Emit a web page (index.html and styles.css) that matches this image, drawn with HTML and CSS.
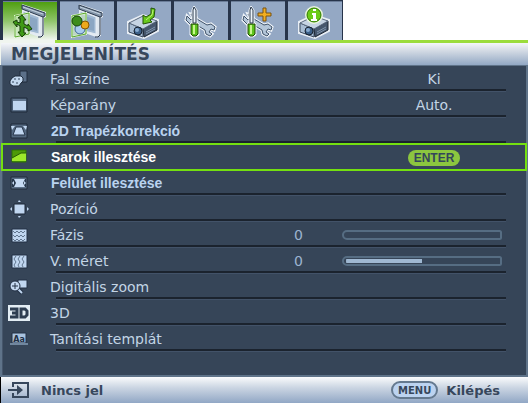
FILE: index.html
```
<!DOCTYPE html>
<html lang="hu">
<head>
    <meta charset="UTF-8">
    <meta name="viewport" content="width=device-width, initial-scale=1.0">
    <title>Megjelenítés</title>
    <link rel="stylesheet" href="styles.css">
</head>
<body>
    <!-- Shared shapes for the tab icons -->
    <svg class="defs" aria-hidden="true">
        <symbol id="screen" viewBox="0 0 36 36">
            <path d="M10 1L34 9V14L32 15V33L27 34L10 28Z" fill="#e4ebf3" />
            <path d="M11 8L27 14V31L11 27Z" fill="#9fb8d2" stroke="#e4ebf3" />
            <path d="M13 12L25 16V28L13 25Z" fill="#8ba6c3" />
            <path d="M29 14V33L27 34" fill="none" stroke="#dfe7ef" stroke-width="2" />
            <path d="M31 13V32L29 34H26" fill="none" stroke="#223044" />
            <path d="M10 2L33 10V13L31 14L10 6Z" fill="#8395a9" stroke="#2d3b4e" />
            <path d="M11 4L31 11" stroke="#c8d5e2" />
            <path d="M3 13L17 10V31L3 34Z" fill="#cfe9c4" fill-opacity=".7" stroke="#e9f8dc" stroke-width="2" />
            <path d="M3 13L17 10V31L3 34Z" fill="none" stroke="#58a82c" />
        </symbol>
        <symbol id="projector" viewBox="0 0 36 36">
            <path d="M2 19L17 12L32 17V28L18 35L2 30Z" fill="#e8eef5" stroke="#e8eef5" stroke-width="2" />
            <path d="M3 20L17 26V34L3 29Z" fill="#a8bdd3" stroke="#3b4a5e" />
            <path d="M17 26L31 18V27L18 34Z" fill="#46576d" stroke="#1d2735" />
            <path d="M3 20L17 13L31 18L17 26Z" fill="#c6d4e3" stroke="#5b6b80" />
            <path d="M20 29L29 24M20 31L29 26" stroke="#8196ae" />
            <circle cx="12" cy="28" r="4" fill="#3b5f87" stroke="#18222f" />
            <circle cx="11" cy="27" r="2" fill="#86aad0" />
        </symbol>
        <symbol id="tools" viewBox="0 0 36 36">
            <path d="M4 13L3 17L7 21L12 21L22 27L23 31L27 33L29 31L26 29L28 26L31 27L32 24L28 21L24 22L14 16L12 12L8 11L10 15L8 17Z" fill="#b4c6d9" stroke="#eef3f8" stroke-width="3" />
            <path d="M4 13L3 17L7 21L12 21L22 27L23 31L27 33L29 31L26 29L28 26L31 27L32 24L28 21L24 22L14 16L12 12L8 11L10 15L8 17Z" fill="#b4c6d9" stroke="#3f526a" />
            <path d="M11 3L14 7V19L16 21V32L13 34H9L7 32V21L9 19V7Z" fill="#fff" stroke="#eef3f8" />
            <path d="M11 4L13 7V20H10V7Z" fill="#eef4fa" stroke="#27364a" />
            <path d="M8 21H15V31L13 33H10L8 31Z" fill="#5fc41c" stroke="#1f4408" />
            <path d="M11 22V31" stroke="#c7f58c" stroke-width="2" />
        </symbol>
    </svg>

    <nav class="tabs">
        <button type="button" class="tab active" aria-label="Megjelenítés">
            <svg viewBox="0 0 36 36">
                <use href="#screen" />
                <path d="M10 12L14 17H12V21L16 23V21L20 26L16 28V26L12 24V30H14L10 34L6 29H8V23L5 21V24L1 19L5 17V19L8 20V15H6Z" fill="#3f9a16" stroke="#173d08" />
            </svg>
        </button>
        <button type="button" class="tab" aria-label="Kép">
            <svg viewBox="0 0 36 36">
                <use href="#screen" />
                <circle cx="11" cy="26" r="5" fill="#a9cbee" stroke="#3c6594" />
                <circle cx="16" cy="22" r="4" fill="#eda91c" stroke="#855505" />
                <circle cx="8" cy="18" r="5" fill="#3d8c1b" stroke="#174708" />
            </svg>
        </button>
        <button type="button" class="tab" aria-label="Forrás">
            <svg viewBox="0 0 36 36">
                <use href="#projector" />
                <path d="M25 5L29 6L28 14L24 17L26 19L17 21L17 12L20 14L25 11Z" fill="#69c91d" stroke="#245508" />
                <path d="M27 7L26 12L20 17" fill="none" stroke="#bdf27a" />
            </svg>
        </button>
        <button type="button" class="tab" aria-label="Alapbeállítások">
            <svg viewBox="0 0 36 36"><use href="#tools" /></svg>
        </button>
        <button type="button" class="tab" aria-label="Haladó beállítások">
            <svg viewBox="0 0 36 36">
                <use href="#tools" />
                <path d="M23 5H26V10H31V13H26V18H23V13H18V10H23Z" fill="#f2ae20" stroke="#7b5310" />
            </svg>
        </button>
        <button type="button" class="tab" aria-label="Információ">
            <svg viewBox="0 0 36 36">
                <use href="#projector" />
                <circle cx="17" cy="12" r="8" fill="#6ccb18" stroke="#e8f5dc" stroke-width="2" />
                <circle cx="17" cy="12" r="7" fill="#6ccb18" stroke="#347a08" />
                <path d="M16 6H19V8H16ZM15 10H19V16H20V18H14V16H16V12H15Z" fill="#fff" />
            </svg>
        </button>
    </nav>

    <h1 class="title">MEGJELENÍTÉS</h1>

    <main class="panel">
        <ul class="menu">
            <li class="row">
                <svg class="icon" viewBox="0 0 24 20">
                    <path d="M13 2H20V13H13Z" fill="#5c7089" stroke="#202c3c" />
                    <path d="M8 7H14L16 9V12L14 14L12 17H6L3 15V12L5 9Z" fill="#c3d8ef" stroke="#202c3c" />
                    <path d="M7 10H9M11 10H13M5 13H7M9 14H11" stroke="#33455b" />
                </svg>
                <span class="label">Fal színe</span>
                <span class="value">Ki</span>
            </li>
            <li class="row">
                <svg class="icon" viewBox="0 0 24 20">
                    <path d="M4 3H20V17H4Z" fill="#4b5e76" stroke="#1f2b3a" />
                    <path d="M6 4H19V16H6Z" fill="#62768f" />
                    <path d="M6 6H19V15H6Z" fill="#c0d6f0" />
                </svg>
                <span class="label">Képarány</span>
                <span class="value">Auto.</span>
            </li>
            <li class="row">
                <svg class="icon" viewBox="0 0 24 20">
                    <path d="M4 3H20V17H4Z" fill="#546880" stroke="#1f2b3a" />
                    <path d="M9 6H15L18 14H6Z" fill="#c0d6f0" stroke="#26354a" />
                    <path d="M4 5H8L5 9ZM20 5H16L19 9Z" fill="#c0d6f0" />
                </svg>
                <span class="label sans">2D Trapézkorrekció</span>
            </li>
            <li class="row selected">
                <svg class="icon" viewBox="0 0 24 20">
                    <path d="M5 3H19V15H5Z" fill="#4c9a08" stroke="#2c7006" />
                    <path d="M5 14V11L14 6H19V14Z" fill="#9de82b" />
                    <path d="M5 11L14 6H19" fill="none" stroke="#265a04" />
                </svg>
                <span class="label sans">Sarok illesztése</span>
                <span class="value"><button type="button" class="enter">ENTER</button></span>
            </li>
            <li class="row">
                <svg class="icon" viewBox="0 0 24 20">
                    <path d="M4 4H20V16H4Z" fill="#5c7088" stroke="#202c3b" />
                    <path d="M5 6H19V14H5Z" fill="#26364a" />
                    <path d="M7 6H18L16 10L18 14H7L9 10Z" fill="#c6daf2" />
                    <path d="M5 10L7 8V12ZM19 10L17 8V12Z" fill="#c6daf2" />
                </svg>
                <span class="label sans">Felület illesztése</span>
            </li>
            <li class="row">
                <svg class="icon" viewBox="0 0 24 20">
                    <path d="M7 5H18V15H7Z" fill="#c0d6f0" stroke="#1d2938" />
                    <path d="M12 1L14 3H11ZM12 19L14 17H11ZM3 10L5 8V12ZM22 10L20 8V12Z" fill="#c0d6f0" />
                </svg>
                <span class="label">Pozíció</span>
            </li>
            <li class="row">
                <svg class="icon" viewBox="0 0 24 20">
                    <path d="M5 4H20V17H5Z" fill="#c0d6f0" stroke="#223044" />
                    <path d="M6 6L8 8L10 6L12 8L14 6L16 8L18 6M6 10L8 12L10 10L12 12L14 10L16 12L18 10M6 14L8 16L10 14L12 16L14 14L16 16L18 14" fill="none" stroke="#61768f" />
                </svg>
                <label class="label" for="phase">Fázis</label>
                <output class="number" for="phase">0</output>
                <input type="range" id="phase" class="slider" min="0" max="100" value="0" style="--fill: 0%">
            </li>
            <li class="row">
                <svg class="icon" viewBox="0 0 24 20">
                    <path d="M5 4H20V17H5Z" fill="#c0d6f0" stroke="#223044" />
                    <path d="M9 5L7 8L9 11L7 14L8 16M13 5L11 8L13 11L11 14L12 16M17 5L15 8L17 11L15 14L16 16" fill="none" stroke="#61768f" />
                </svg>
                <label class="label" for="hsize">V. méret</label>
                <output class="number" for="hsize">0</output>
                <input type="range" id="hsize" class="slider" min="-50" max="50" value="0" style="--fill: 50%">
            </li>
            <li class="row">
                <svg class="icon" viewBox="0 0 24 20">
                    <path d="M11 3H20V11H11Z" fill="#c0d6f0" stroke="#223044" />
                    <path d="M11 12L15 16" stroke="#223044" stroke-width="4" />
                    <path d="M11 12L15 16" stroke="#c0d6f0" stroke-width="2" />
                    <circle cx="8" cy="9" r="5" fill="#c6daf2" stroke="#223044" />
                    <path d="M8 6V12M5 9H11" stroke="#223044" />
                </svg>
                <span class="label">Digitális zoom</span>
            </li>
            <li class="row">
                <svg class="icon" viewBox="0 0 24 20">
                    <path d="M1 2H23V18H1Z" fill="#e3edf4" />
                    <path d="M3 6H10V14H3M5 10H10M14 6H18L20 8V12L18 14H14Z" fill="none" stroke="#2e3e52" stroke-width="3" />
                </svg>
                <span class="label">3D</span>
            </li>
            <li class="row">
                <svg class="icon" viewBox="0 0 24 20">
                    <path d="M5 4H19V14H5Z" fill="#a9c2de" stroke="#223044" />
                    <path d="M3 15H21" stroke="#71879f" stroke-width="2" />
                    <text class="icon-text" x="12" y="13">Aa</text>
                </svg>
                <span class="label">Tanítási templát</span>
            </li>
        </ul>
    </main>

    <footer class="footer">
        <svg class="source" viewBox="0 0 22 18">
            <path d="M5 6V2H20V16H5V12" fill="none" stroke="#37475c" stroke-width="2" />
            <path d="M0 8H9V4L15 9L9 14V10H0Z" fill="#37475c" />
        </svg>
        <span class="signal">Nincs jel</span>
        <button type="button" class="menu-btn">MENU</button>
        <span>Kilépés</span>
    </footer>

    <script>
        const sliders = document.querySelectorAll(".slider");

        sliders.forEach((slider) => {
            slider.addEventListener("input", function() {
                const range = slider.max - slider.min;
                slider.style.setProperty("--fill", (slider.value - slider.min) / range * 100 + "%");
                slider.previousElementSibling.value = slider.value;
            });
        });
    </script>
</body>
</html>
```
FILE: styles.css
```
* {
  margin: 0;
  padding: 0;
  box-sizing: border-box;
}

body {
  display: flex;
  flex-direction: column;
  min-height: 100vh;
  background-color: #fff;
  color: #c3d5e6;
  font-family: "DejaVu Sans", Verdana, sans-serif;
  font-size: 14px;
}

button {
  border: none;
  font-family: inherit;
  cursor: pointer;
}

.defs {
  display: none;
}

/* Tabs */
.tabs {
  display: flex;
  gap: 3px;
  align-self: flex-start;
  padding: 1px 1px 0 3px;
  background-color: #27344a;
}

.tab {
  display: flex;
  align-items: center;
  justify-content: center;
  width: 54px;
  height: 39px;
  background-color: #94a8c4;
  border-top: 1px solid #6b7d98;
}

.tab.active {
  background: linear-gradient(#4f9f10, #8fc46a 50%, #f0f5ef);
}

.tab svg {
  width: 36px;
  height: 36px;
}

/* Title bar */
.title {
  padding-left: 10px;
  border-left: 1px solid #000;
  border-top: 3px solid #9bdc3c;
  border-image: linear-gradient(90deg, #f0f5ef 56px, #9bdc3c 56px) 3;
  background: linear-gradient(#f4f6f9, #d3dae4 35%, #93a8c4);
  color: #37475c;
  font-size: 17px;
  line-height: 22px;
}

/* Menu rows */
.panel {
  flex: 1;
  border: 2px solid #5f7389;
  border-top-width: 1px;
  background-color: #364558;
  box-shadow: inset 1px 0 #46566b;
}

.row {
  display: grid;
  grid-template-columns: 24px 1fr 48px 160px;
  align-items: center;
  height: 26px;
  padding: 0 24px 0 5px;
  background: linear-gradient(#1b232e 2px, #425268 2px) no-repeat 54px 100%;
  background-size: calc(100% - 74px) 3px;
  list-style: none;
}

.icon {
  width: 24px;
  height: 20px;
}

.icon-text {
  fill: #223044;
  font-size: 8px;
  font-weight: bold;
  text-anchor: middle;
}

.label {
  padding-left: 19px;
}

.label.sans {
  padding-left: 20px;
  color: #b9d3f0;
  font-family: "Liberation Sans", Arial, sans-serif;
  font-weight: bold;
}

.value {
  grid-column: 4;
  padding-left: 24px;
  text-align: center;
}

.number {
  color: #9cb4d0;
}

.selected {
  background: none;
  outline: 2px solid #74e010;
  outline-offset: -1px;
}

.selected .label {
  color: #fff;
}

.enter {
  padding: 0 6px;
  border-radius: 8px;
  background-color: #8cc63f;
  color: #34455a;
  font-family: "Liberation Sans", Arial, sans-serif;
  font-size: 12px;
  font-weight: bold;
  line-height: 16px;
}

.slider {
  appearance: none;
  width: 100%;
  height: 10px;
  padding: 0 2px;
  border: 2px solid #566d83;
  border-radius: 6px 3px 3px 6px;
  background: linear-gradient(90deg, #9fb8d2 var(--fill), transparent var(--fill)) content-box no-repeat;
  background-size: 100% 4px;
  background-position: 0 50%;
}

.slider::-webkit-slider-thumb {
  appearance: none;
  width: 8px;
  height: 6px;
  background: transparent;
}

/* Footer */
.footer {
  display: flex;
  align-items: center;
  height: 26px;
  padding: 0 28px 0 7px;
  border-left: 1px solid #000;
  background: linear-gradient(#fafbfc, #ccd6e3 40%, #91a7c5);
  color: #37475c;
  font-size: 13px;
  font-weight: bold;
}

.source {
  width: 22px;
  height: 18px;
}

.signal {
  flex: 1;
  padding-left: 11px;
}

.menu-btn {
  height: 18px;
  margin-right: 8px;
  padding: 0 5px;
  border: 2px solid #64798f;
  border-radius: 9px;
  background-color: #bcd3f0;
  color: #37475c;
  font-size: 10px;
  font-weight: bold;
}
```
